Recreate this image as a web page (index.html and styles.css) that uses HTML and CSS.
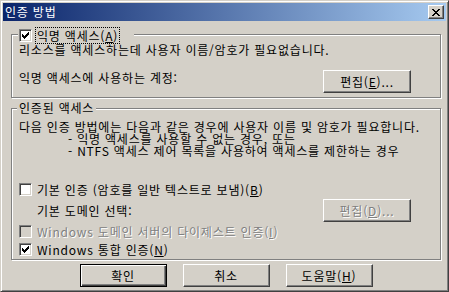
FILE: index.html
```html
<!DOCTYPE html>
<html lang="ko">
<head>
    <meta charset="UTF-8">
    <title>인증 방법</title>
    <link rel="stylesheet" href="styles.css">
</head>
<body>
    <div class="window">
        <div class="titlebar">
            <span class="title">인증 방법</span>
            <button class="close" title="닫기">
                <svg width="8" height="7" viewBox="0 0 8 7">
                    <path d="M0 0h2v1h-2zM6 0h2v1h-2zM1 1h2v1h-2zM5 1h2v1h-2zM2 2h4v1h-4zM3 3h2v1h-2zM2 4h4v1h-4zM1 5h2v1h-2zM5 5h2v1h-2zM0 6h2v1h-2zM6 6h2v1h-2z" fill="#000"/>
                </svg>
            </button>
        </div>

        <div class="content">
            <div class="group group-anon">
                <div class="group-title check-title">
                    <span class="check checked">
                        <svg width="7" height="7" viewBox="0 0 7 7"><path d="M6 0h1v1h-1zM5 1h2v1h-2zM0 2h1v1h-1zM4 2h3v1h-3zM0 3h2v1h-2zM3 3h3v1h-3zM0 4h5v1h-5zM1 5h3v1h-3zM2 6h1v1h-1z" fill="#000"/></svg>
                    </span>
                    <span class="focus">익명 액세스(<u>A</u>)</span>
                </div>
                <p class="text">리소스를 액세스하는데 사용자 이름/암호가 필요없습니다.</p>
                <div class="row row-top">
                    <span class="row-label">익명 액세스에 사용하는 계정:</span>
                    <button class="btn">편집(<u>E</u>)...</button>
                </div>
            </div>

            <div class="group group-auth">
                <div class="group-title">인증된 액세스</div>
                <p class="line">다음 인증 방법에는 다음과 같은 경우에 사용자 이름 및 암호가 필요합니다.</p>
                <p class="line indent">- 익명 액세스를 사용할 수 없는 경우, 또는</p>
                <p class="line indent">- NTFS 액세스 제어 목록을 사용하여 액세스를 제한하는 경우</p>

                <label class="option option-basic">
                    <span class="check"></span>
                    <span>기본 인증 (암호를 일반 텍스트로 보냄)(<u>B</u>)</span>
                </label>
                <div class="row row-domain">
                    <span class="row-label sub">기본 도메인 선택:</span>
                    <button class="btn disabled" disabled>편집(<u>D</u>)...</button>
                </div>
                <label class="option option-digest disabled">
                    <span class="check"></span>
                    <span>Windows 도메인 서버의 다이제스트 인증(<u>I</u>)</span>
                </label>
                <label class="option option-win">
                    <span class="check checked">
                        <svg width="7" height="7" viewBox="0 0 7 7"><path d="M6 0h1v1h-1zM5 1h2v1h-2zM0 2h1v1h-1zM4 2h3v1h-3zM0 3h2v1h-2zM3 3h3v1h-3zM0 4h5v1h-5zM1 5h3v1h-3zM2 6h1v1h-1z" fill="#000"/></svg>
                    </span>
                    <span>Windows 통합 인증(<u>N</u>)</span>
                </label>
            </div>

            <div class="actions">
                <button class="btn btn-default">확인</button>
                <button class="btn">취소</button>
                <button class="btn">도움말(<u>H</u>)</button>
            </div>
        </div>
    </div>
</body>
</html>
```

FILE: styles.css
```css
* {
    box-sizing: border-box;
}
html, body {
    margin: 0;
    padding: 0;
}
body {
    background-color: #d4d0c8;
    font-family: "Noto Sans CJK KR", "Noto Sans", sans-serif;
    font-size: 12px;
    letter-spacing: 0.8px;
    color: #000;
}
p {
    margin: 0;
}
u {
    text-underline-offset: 1px;
}
.window {
    width: 449px;
    height: 292px;
    padding: 2px;
    background: #d4d0c8;
    border: 1px solid;
    border-color: #d4d0c8 #404040 #404040 #d4d0c8;
    box-shadow: inset 1px 1px 0 #fff, inset -1px -1px 0 #808080;
}
.titlebar {
    height: 18px;
    padding: 0 2px;
    display: flex;
    align-items: center;
    justify-content: space-between;
    background: linear-gradient(to right, #0a246a, #a6caf0);
    color: #fff;
}
.title {
    line-height: 18px;
}
.close {
    width: 16px;
    height: 14px;
    padding: 0;
    display: flex;
    align-items: center;
    justify-content: center;
    background: #d4d0c8;
    border: 1px solid;
    border-color: #fff #404040 #404040 #fff;
    box-shadow: inset -1px -1px 0 #808080;
}
.content {
    padding: 13px 5px 0 8px;
}
.group {
    position: relative;
    border: 1px solid #808080;
    box-shadow: 1px 1px 0 #fff, inset 1px 1px 0 #fff;
}
.group-title {
    position: absolute;
    top: -8px;
    left: 5px;
    padding: 0 2px;
    line-height: 14px;
    background: #d4d0c8;
}
.check-title {
    left: 6px;
    height: 17px;
    padding: 0 14px 0 1px;
    display: flex;
    align-items: center;
}
.focus {
    margin-left: 3px;
    padding: 0 1px;
    line-height: 15px;
    border: 1px dotted #000;
}
.check {
    width: 13px;
    height: 13px;
    flex: none;
    display: flex;
    align-items: center;
    justify-content: center;
    background: #fff;
    border: 1px solid;
    border-color: #808080 #fff #fff #808080;
    box-shadow: inset 1px 1px 0 #404040, inset -1px -1px 0 #d4d0c8;
}
.group-anon {
    padding: 8px 0 4px 7px;
}
.text {
    line-height: 14px;
}
.row {
    display: flex;
    justify-content: space-between;
    padding-right: 29px;
}
.row-top {
    margin-top: 13px;
    align-items: flex-start;
}
.row-top .row-label {
    margin-top: 1px;
    line-height: 14px;
}
.group-auth {
    margin-top: 10px;
    padding: 12px 0 3px 7px;
}
.line {
    line-height: 12px;
    white-space: nowrap;
}
.indent {
    padding-left: 49px;
}
.option {
    height: 13px;
    display: flex;
    align-items: center;
    gap: 5px;
    line-height: 13px;
    white-space: nowrap;
}
.option-basic {
    margin-top: 26px;
}
.row-domain {
    margin-top: 3px;
    align-items: center;
}
.sub {
    padding-left: 18px;
}
.option-digest {
    margin-top: 3px;
}
.option-win {
    margin-top: 5px;
}
.disabled {
    color: #808080;
    text-shadow: 1px 1px 0 #fff;
}
.option.disabled .check {
    background: #d4d0c8;
}
.btn {
    width: 88px;
    height: 23px;
    padding: 0;
    font-family: inherit;
    font-size: 12px;
    letter-spacing: inherit;
    line-height: 21px;
    color: #000;
    background: #d4d0c8;
    border: 1px solid;
    border-color: #fff #404040 #404040 #fff;
    box-shadow: inset -1px -1px 0 #808080;
}
.btn.disabled {
    color: #808080;
}
.btn-default {
    border-color: #000;
    box-shadow: inset 1px 1px 0 #fff, inset -1px -1px 0 #404040, inset -2px -2px 0 #808080;
}
.actions {
    margin-top: 4px;
    display: flex;
    justify-content: center;
    gap: 16px;
}
.actions .btn {
    width: 87px;
}
```
